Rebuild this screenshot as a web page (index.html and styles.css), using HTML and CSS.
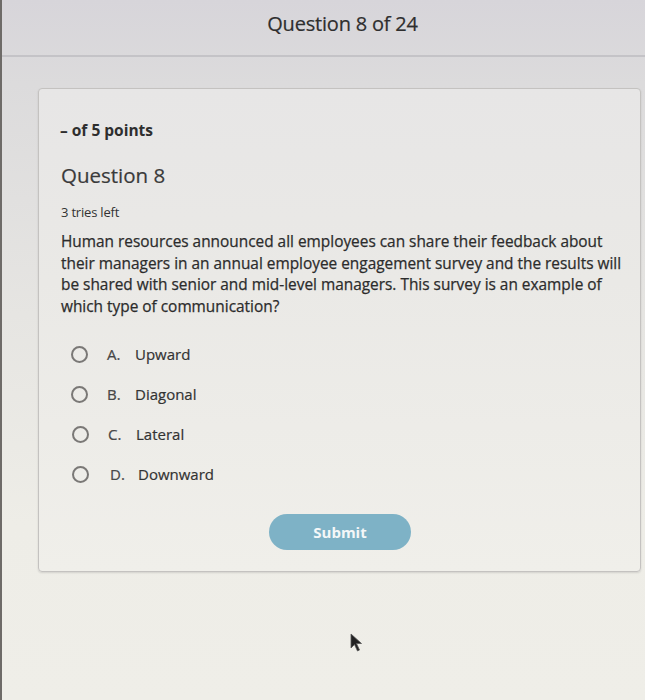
FILE: index.html
```html
<!DOCTYPE html>
<html lang="en">
<head>
<meta charset="utf-8">
<title>Question 8 of 24</title>
<link rel="stylesheet" href="styles.css">
</head>
<body>
<div class="page">
  <header class="top">
    <h1 class="top-title">Question 8 of 24</h1>
  </header>
  <main class="card">
    <div class="points">– of 5 points</div>
    <h2 class="qtitle">Question 8</h2>
    <div class="tries">3 tries left</div>
    <p class="prompt">Human resources announced all employees can share their feedback about their managers in an annual employee engagement survey and the results will be shared with senior and mid-level managers. This survey is an example of which type of communication?</p>
    <ul class="options">
      <li class="option"><span class="radio"></span><span class="letter">A.</span><span class="text">Upward</span></li>
      <li class="option"><span class="radio"></span><span class="letter">B.</span><span class="text">Diagonal</span></li>
      <li class="option"><span class="radio"></span><span class="letter">C.</span><span class="text">Lateral</span></li>
      <li class="option"><span class="radio"></span><span class="letter">D.</span><span class="text">Downward</span></li>
    </ul>
    <div class="actions"><button class="submit" type="button">Submit</button></div>
  </main>
  <svg class="cursor" width="14" height="20" viewBox="0 0 14 20"><path d="M1 1 L1 15 L4.5 11.5 L7.5 18 L9.5 17 L6.5 10.5 L11.5 10.5 Z" fill="#222" stroke="#555" stroke-width="0.8"/></svg>
</div>
</body>
</html>
```
FILE: styles.css
```css
html, body {
  margin: 0;
  padding: 0;
}
body {
  width: 645px;
  height: 700px;
  overflow: hidden;
  font-family: "Open Sans", "Noto Sans", sans-serif;
  color: #3a3a3a;
  background: linear-gradient(180deg, #d7d5da 0%, #dcdbdc 12%, #e6e5e2 45%, #eeede7 75%, #efeee8 100%);
}
.page {
  position: relative;
  height: 700px;
  border-left: 2px solid #6e6b68;
  box-sizing: border-box;
}
.top {
  height: 57px;
  border-bottom: 2px solid #c4c3c7;
  box-sizing: border-box;
  display: flex;
  justify-content: center;
  padding-left: 38px;
  padding-top: 9px;
}
.top-title {
  margin: 0;
  font-size: 20px;
  font-weight: 400;
  line-height: 30px;
  color: #2e2e2e;
  letter-spacing: -0.2px;
  -webkit-text-stroke: 0.2px #2e2e2e;
}
.card {
  margin: 31px 4px 0 36px;
  border: 1px solid #c4c2c0;
  border-radius: 4px;
  background: linear-gradient(180deg, #e7e6e6 0%, #eae9e6 40%, #f0efea 100%);
  box-shadow: 0 1px 2px rgba(0,0,0,0.12);
  padding: 31px 20px 22px 21px;
  height: 484px;
  box-sizing: border-box;
}
.points {
  font-size: 15.5px;
  font-weight: 700;
  line-height: 20px;
  color: #2e2e2e;
}
.qtitle {
  margin: 20px 0 0 1px;
  font-size: 20.5px;
  font-weight: 400;
  line-height: 30px;
  color: #3a3a3a;
  -webkit-text-stroke: 0.2px #3a3a3a;
}
.tries {
  margin: 13px 0 0 1px;
  font-size: 13px;
  line-height: 18px;
  color: #333;
  letter-spacing: -0.2px;
}
.prompt {
  margin: 10px 0 0 1px;
  font-size: 15.4px;
  line-height: 21.5px;
  color: #2c2c2c;
  width: 562px;
  -webkit-text-stroke: 0.25px #2c2c2c;
}
.options {
  list-style: none;
  margin: 17px 0 0 0;
  padding: 0 0 0 11px;
}
.option {
  height: 40px;
  display: flex;
  align-items: center;
  font-size: 15px;
  color: #333;
  -webkit-text-stroke: 0.2px #333;
}
.radio {
  width: 17px;
  height: 17px;
  border: 2px solid #7a7876;
  border-radius: 50%;
  box-sizing: border-box;
  margin-right: 19px;
  flex: none;
  -webkit-text-stroke: 0;
}
.letter {
  width: 28px;
  color: #4a4a4a;
}
.options .option:nth-child(3) .radio,
.options .option:nth-child(4) .radio {
  margin-left: 1px;
}
.options .option:nth-child(4) .letter {
  margin-left: 2px;
}
.actions {
  margin-top: 20px;
  display: flex;
  justify-content: center;
}
.submit {
  width: 142px;
  height: 36px;
  border: none;
  border-radius: 18px;
  background: #7eb2c6;
  color: #f4f7f8;
  font-family: "Open Sans", "Noto Sans", sans-serif;
  font-size: 15px;
  font-weight: 700;
}
.cursor {
  position: absolute;
  left: 348px;
  top: 633px;
}
```
